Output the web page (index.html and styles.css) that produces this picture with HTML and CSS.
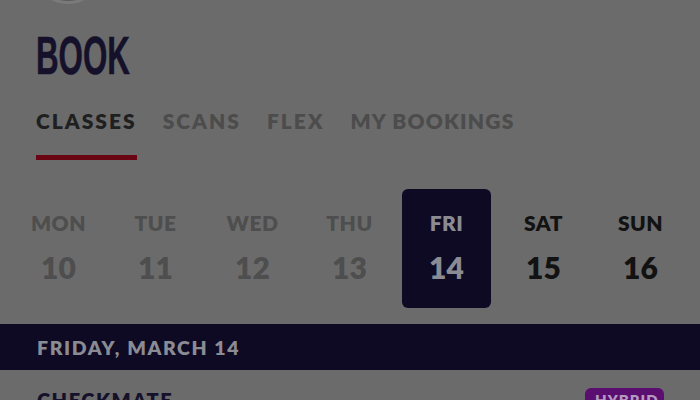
FILE: index.html
```html
<!DOCTYPE html>
<html>
<head>
<meta charset="utf-8">
<link rel="stylesheet" href="styles.css">
</head>
<body>
<div class="page">
  <div class="avatar"></div>
  <h1 class="title"><span class="title-text">BOOK</span></h1>
  <nav class="tabs">
    <span class="tab active">CLASSES</span>
    <span class="tab">SCANS</span>
    <span class="tab">FLEX</span>
    <span class="tab">MY BOOKINGS</span>
  </nav>
  <div class="days">
    <div class="day past"><span class="dname">MON</span><span class="dnum">10</span></div>
    <div class="day past"><span class="dname">TUE</span><span class="dnum">11</span></div>
    <div class="day past"><span class="dname">WED</span><span class="dnum">12</span></div>
    <div class="day past"><span class="dname">THU</span><span class="dnum">13</span></div>
    <div class="day selected"><span class="dname">FRI</span><span class="dnum">14</span></div>
    <div class="day"><span class="dname">SAT</span><span class="dnum">15</span></div>
    <div class="day"><span class="dname">SUN</span><span class="dnum">16</span></div>
  </div>
  <div class="date-bar">FRIDAY, MARCH 14</div>
  <div class="class-row">
    <span class="class-name">CHECKMATE</span>
    <span class="badge">HYBRID</span>
  </div>
</div>
</body>
</html>
```
FILE: styles.css
```css
html, body {
  margin: 0;
  padding: 0;
  background: #6b6b6b;
  overflow: hidden;
  height: 400px;
}
.page {
  width: 700px;
  font-family: "Lato", "Noto Sans", sans-serif;
}
.avatar {
  width: 72px;
  height: 72px;
  border-radius: 50%;
  background: #5b5b5b;
  border: 3px solid #7a7a7a;
  margin: -68px 0 0 32px;
  box-sizing: border-box;
}
.title {
  margin: 21px 0 0 36px;
  font-family: "Liberation Sans", "DejaVu Sans", sans-serif;
  font-weight: 700;
  font-size: 54px;
  line-height: 60px;
  color: #15112b;
}
.title-text {
  display: inline-block;
  transform: scaleX(0.58);
  transform-origin: left center;
  -webkit-text-stroke: 0.6px #15112b;
}
.tabs {
  display: flex;
  gap: 26px;
  padding-left: 36px;
  margin-top: 23px;
}
.tab {
  font-weight: 800;
  font-size: 21px;
  letter-spacing: 2px;
  color: #4c4c4c;
  line-height: 26px;
  padding-bottom: 21px;
  border-bottom: 5px solid transparent;
}
.tab:last-child { letter-spacing: 1.2px; }
.tab.active {
  color: #1f1f1f;
  border-bottom-color: #6a0514;
}
.days {
  display: grid;
  grid-template-columns: repeat(7, 97px);
  padding-left: 10px;
  margin-top: 29px;
}
.day {
  margin: 0 4px;
  height: 119px;
  border-radius: 6px;
  display: flex;
  flex-direction: column;
  align-items: center;
  color: #121212;
}
.day.past { color: #4e4e4e; }
.day.selected { background: #0e0a24; color: #8b8b93; }
.dname {
  font-weight: 800;
  font-size: 21px;
  letter-spacing: 0.5px;
  line-height: 26px;
  margin-top: 21px;
}
.dnum {
  font-weight: 800;
  font-size: 30px;
  line-height: 36px;
  margin-top: 13px;
}
.date-bar {
  margin-top: 16px;
  height: 46px;
  background: #0e0a24;
  color: #8b8b93;
  font-weight: 800;
  font-size: 19.5px;
  letter-spacing: 1.6px;
  line-height: 47px;
  padding-left: 37px;
}
.class-row {
  display: flex;
  justify-content: space-between;
  align-items: flex-start;
  padding: 18px 36px 0 37px;
}
.class-name {
  font-weight: 800;
  font-size: 20px;
  letter-spacing: 1.5px;
  color: #15112b;
  line-height: 24px;
}
.badge {
  background: #5a0e70;
  color: #b39ac0;
  font-weight: 800;
  font-size: 15px;
  letter-spacing: 1px;
  border-radius: 6px;
  padding: 3px 10px;
  margin-top: 0;
  width: 59px;
  text-align: center;
}
```
